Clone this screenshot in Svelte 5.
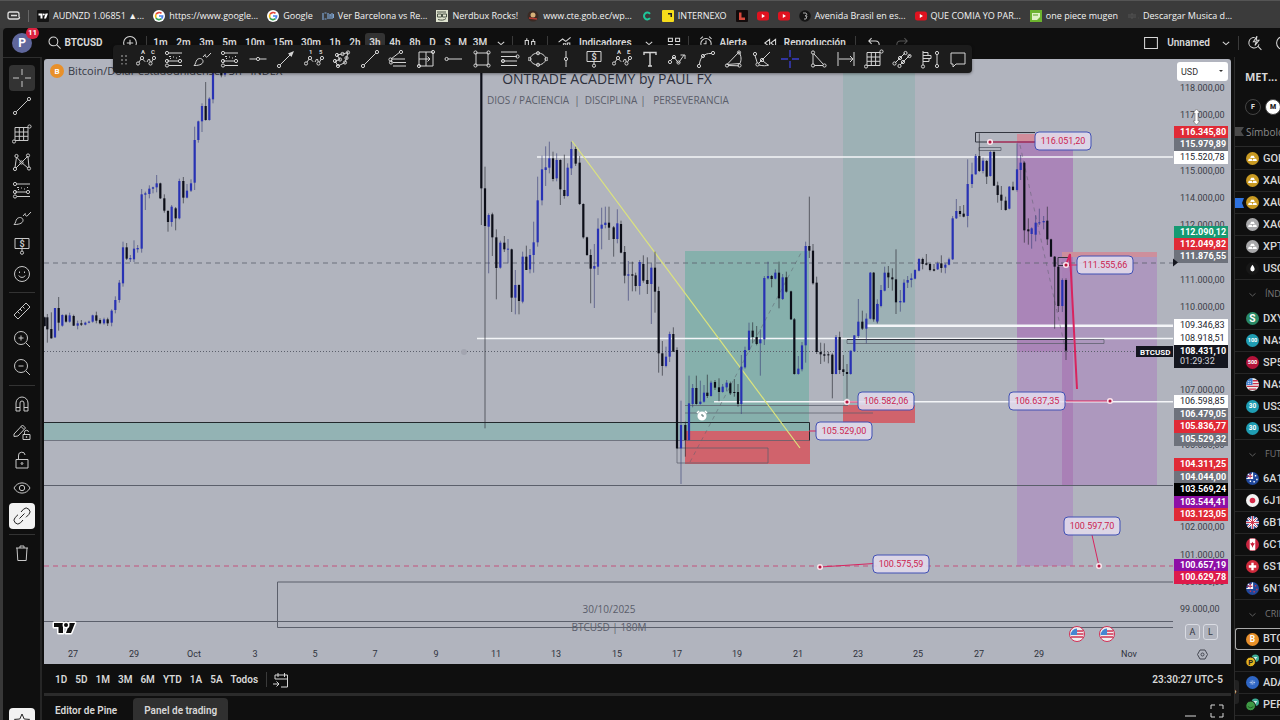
<script>
  const dot = (x, y, r = 1.6) => `<circle cx="${x}" cy="${y}" r="${r}"/>`;
  const dots = (...p) => p.map(([x, y]) => dot(x, y)).join('');
  const path = (d, extra = '') => `<path d="${d}" ${extra}/>`;
  const letter = (t, x, y, s = 6) => `<text x="${x}" y="${y}" font-size="${s}">${t}</text>`;
  const solid = 'fill="currentColor" stroke="none"';

  const wave = (a, b) =>
    path('M3 13l2.2-3M6.8 10.2l2.4 2.6M11 13l1.6-3M13.5 10l.8 3M15.6 13l1.6-3') +
    dots([2, 14.5], [6, 9], [14.5, 14.5], [18, 9]) + letter(a, 5, 5) + letter(b, 15, 5);
  const channel =
    path('M5 4h13M3 12h11M5 16.5h13') + path('M5 7.5h2M9 8h1M12 9h1M15 7.5h1M6 9.5h1') +
    dots([3, 4], [16, 12], [3, 12], [3, 16.5]);
  const grid = path('M3 3.5h13v13H3zM7.3 3.5v13M11.6 3.5v13M3 8h13M3 12.3h13') + dots([2, 17.5], [17.5, 2.5]);
  const brush = path('M2 16.5C4 15 3.500 12.500 5 10.800C7 8.700 10.500 9.300 11 11.800C11.400 14.500 8.500 16.600 2 16.500zM11 8l2.200-2.500c-.2 1.800.8 3 2 2.500L19 4');
  const trend = path('M4.200 15.800L15.800 4.200') + dots([3, 17], [17, 3]);
  const price = path('M3 2.500h14v10H3zM10 12.500v2.500') + dot(10, 16.700) + letter('$', 7.600, 10.800, 9);
  const zoomGlass = path('M14 14l4 4') + dot(9, 9, 6.500) + path('M6.500 9h5');

  const icons = {
    cross: path('M10 1v6M10 13v6M1 10h6M13 10h6'),
    trend, grid, brush, price, channel,
    xabcd: path('M3 15.500L4.500 5M4.500 5l5 5.500M16 4L9.500 10.500M17 15.500L16 5M4 16l5.500-5.500L16 16') + dots([3, 17], [4.500, 4], [9.500, 10.500], [16, 3.500], [17, 16.500]),
    smile: dot(10, 10, 7.500) + path('M6.800 11.500c1 2.500 5.400 2.500 6.400 0M7.500 7.500v1.500M12.500 7.500v1.500'),
    ruler: path('M2 14L14 2l4 4L6 18zM5.500 10.500l2 2M8 8l2 2M10.500 5.500l2 2'),
    zoomIn: zoomGlass + path('M9 6.500v5'),
    zoomOut: zoomGlass,
    magnet: path('M4 17V9a6 6 0 0 1 12 0v8h-4V9a2 2 0 0 0-4 0v8zM4 13.500h4M12 13.500h4'),
    pencilLock: path('M2 12L10.500 3l3 3L6 14l-4 .5zM9 4.500l3 3M11 12.500h7v5h-7zM12.500 12.500v-2a2 2 0 0 1 4-.5') + dot(14.500, 15, .5),
    lock: path('M4 9.500h12v8.500H4zM6.500 9.500V6a3.300 3.300 0 0 1 6.600-1') + dot(10, 13.500, .9),
    eye: path('M2 10c3.500-6.800 12.500-6.800 16 0-3.500 6.800-12.500 6.800-16 0z') + dot(10, 10, 2.700),
    link: path('M9 6l2.500-2.800a3.600 3.600 0 0 1 5.300 5.300L14 11.300M11 14l-2.500 2.800a3.600 3.600 0 0 1-5.300-5.300L6 8.700M7.500 12.500l5-5'),
    trash: path('M4 5h12M5 5l.8 12.500h8.400L15 5M8 5V3h4v2'),
    star: path('M10 3l2.200 5 5.300.4-4 3.500 1.200 5.100L10 14.200 5.300 17l1.200-5.100-4-3.500L7.800 8z'),
    abc: wave('A', 'C'),
    impulse: wave('1', '5'),
    triangleWave: wave('A', 'E'),
    hline: path('M1.500 10h6.500M12 10h6.500') + dot(10, 10),
    arrow: path('M4.200 15.800L15 5') + dot(3, 17) + path('M18 2l-6 2.500 3.500 3.500z', solid),
    poly: path('M5 6l5.500-1L16 3.500 14.500 9 13 13.500 6 17 3 12l5-1.500z') + dots([5, 6], [10.500, 5], [16, 3.500], [14.500, 9], [13, 13.500], [6, 17], [3, 12], [8, 10.500]),
    wedge: path('M3 10L12 3M3 10h14M5 13.500h13M5 17h13M3.500 11v2.500') + dots([2.500, 10.500], [13, 3], [3, 13.500]),
    rangeBox: path('M3 3h14v14H3zM3 10h11M11.500 7.500L14 10l-2.500 2.500M10 3v14') + dots([3, 17], [17, 3]),
    hray: path('M4.200 10H18') + dot(2.600, 10),
    rect: path('M4 4h12v12H4z') + dots([3.500, 3.500], [16.500, 3.500], [3.500, 16.500], [16.500, 16.500]),
    levels: path('M1 3h16M1 7.500h16M1 12h16M1 16.500h16') + dots([17.500, 7.500], [3, 12]),
    ellipse: path('M2 10c2-8 14-8 16 0-2 8-14 8-16 0z') + dots([1.500, 10], [18.500, 10], [10, 4.200], [10, 15.800]),
    vline: path('M10 2v6.300M10 11.700V18') + dot(10, 10),
    text: path('M4 6V3.500h12V6M10 3.500v13.500M8 17h4', 'stroke-width="1.400"'),
    path: path('M2 12l4-4 4.500 6L16 6M12.500 6H17v4') + dots([2, 13], [6, 8], [10.500, 13.500]),
    curve: path('M3.500 15C4 9 8 4 15 4.500') + dots([3, 17], [7, 7], [17, 4]),
    arcTri: path('M3 15.500L15 3c2.500 4 2.500 8 1 11.500zM4 16.500l11 .3') + dots([3, 16.500], [15, 3.500], [15.500, 16.500]),
    fork: path('M3 6.500l2.300 7.500M6.500 14.500L18 3M7 16c4 1 7 1 10 0M11 12l5 4') + dots([5.500, 15.500], [10, 11], [3, 5]),
    crossBlue: path('M10 1v7M10 12v7M1 10h7M12 10h7', 'stroke="#3a3ecb" stroke-width="1.400"'),
    triangle: path('M5 5v10M6 5l9.500 10.500M6.500 16.500h8.500') + dots([5, 3.500], [5, 16.500], [16.500, 16.500]),
    measure: path('M2 3v14M18 3v14M3 10h14M14 7l3 3-3 3'),
    gridBox: grid,
    parallel: path('M3 14L13 4M8 16L18 6') + dots([2.500, 14.500], [8, 9], [13.500, 4], [11, 13], [7.500, 17], [17.500, 7]),
    profile: path('M3 2v14M3 3.500h5v3H3M3 6.500h8v3H3M3 9.500h6v3H3M17 6v9') + dots([3, 17.500], [17, 4], [17, 17]),
    note: path('M3 4h14v11H8l-3 3v-3H3z'),
    search: dot(8, 8, 5.500) + path('M12 12l5 5'),
    plus: dot(10, 10, 8) + path('M10 6v8M6 10h8'),
    chevron: path('M6 8.500l4 3.500 4-3.500'),
    candles: path('M6 4v3M6 15v3M4 7h4v8H4zM14 5v3M14 14v3M12 8h4v6h-4z'),
    indicators: path('M2 9l5-4 4 3 6-5M3 17v-4h3v4M8 17v-6h3v6M13 17v-7h3v7'),
    tiles: path('M3 4h5v4H3zM12 4h5v4h-5zM3 12h5v4H3zM12 12h5v4h-5z'),
    clock: dot(10, 11, 6.500) + path('M10 7v4h-3M3 5l3-3M17 5l-3-3'),
    rewind: path('M9.500 5.500v9l-6-4.500zM17 5.500v9l-6-4.500z'),
    undo: path('M7 4L3.500 7.500 7 11M3.500 7.500H12c3 0 4.500 2 4.500 5'),
    redo: path('M13 4l3.500 3.500L13 11M16.500 7.500H8c-3 0-4.500 2-4.500 5'),
    square: path('M2 3h16v14H2z'),
    quick: path('M9.500 3.200a6.500 6.500 0 1 0 5.500 8.500M13.500 14l4.500 4.500M12.500 1.500L8 8.500h3.500L10 13l5-6.500h-3.500z'),
    ring: dot(10, 10, 8),
    calendar: path('M4 9V5h12.500v12H10M4 9h12.500M7 3v4M13.500 3v4M2 14h6M5.500 11.500L8 14l-2.500 2.500'),
    minimize: path('M4 15h11'),
    maximize: path('M4 8V4h4M12 4h4v4M16 12v4h-4M8 16H4v-4'),
  };

  const bookmarks = [
    ['tv', 'AUDNZD 1.06851 ▲...'], ['google', 'https://www.google...'], ['google', 'Google'],
    ['bars', 'Ver Barcelona vs Re...'], ['nerd', 'Nerdbux Rocks!'], ['crest', 'www.cte.gob.ec/wp...'],
    ['c', ''], ['yellow', 'INTERNEXO'], ['l', ''], ['yt', ''], ['yt', ''],
    ['dark', 'Avenida Brasil en es...'], ['yt', 'QUE COMIA YO PAR...'], ['green', 'one piece mugen'],
    ['faint', 'Descargar Musica d...'],
  ];

  const intervals = ['1m', '2m', '3m', '5m', '10m', '15m', '30m', '1h', '2h', '3h', '4h', '8h', 'D', 'S', 'M', '3M'];
  const intervalClass = (t) => (t.length === 3 ? 'wide' : t.length === 1 ? 'one' : t.endsWith('m') ? 'min' : 'hour');

  const favourites = ['abc', 'channel', 'brush', 'channel', 'hline', 'arrow', 'impulse', 'poly', 'trend', 'wedge', 'rangeBox', 'hray', 'rect', 'levels', 'ellipse', 'vline', 'price', 'triangleWave', 'text', 'path', 'curve', 'arcTri', 'fork', 'crossBlue', 'triangle', 'measure', 'gridBox', 'parallel', 'profile', 'note'];
  const tools = ['cross', 'trend', 'grid', 'xabcd', 'channel', 'brush', 'price', 'smile', '-', 'ruler', 'zoomIn', 'zoomOut', '-', 'magnet', 'pencilLock', 'lock', 'eye', 'link', '-', 'trash'];
  const ranges = ['1D', '5D', '1M', '3M', '6M', 'YTD', '1A', '5A', 'Todos'];

  const watch = [
    { rows: [['gold', 'GOLD'], ['gold', 'XAUUSD'], ['gold', 'XAUEUR', true], ['silver', 'XAGUSD'], ['silver', 'XPTUSD'], ['oil', 'USOIL']] },
    { title: 'ÍNDICES', rows: [['dxy', 'DXY'], ['n100', 'NAS100'], ['s500', 'SP500'], ['us', 'NASDAQ'], ['n30', 'US30'], ['n30', 'US30M']] },
    { title: 'FUTUROS', rows: [['au', '6A1!'], ['jp', '6J1!'], ['gb', '6B1!'], ['ca', '6C1!'], ['ch', '6S1!'], ['nz', '6N1!']] },
    { title: 'CRIPTO', rows: [['btc', 'BTCUSD'], ['pond', 'PONKE'], ['ada', 'ADAUSD'], ['pepe', 'PEPE']] },
  ];

  // Candles: x, high, body top, body bottom, low, colour; in thirds of a chart unit from the group's origin.
  const groups = [
    { ox: 0, oy: 60, rows: `134 770 772 798 800 k|142 762 772 808 848 k|154 757 807 835 836 k|165 744 744 832 834 b|176 711 744 788 812 k|187 763 765 797 800 b|198 762 766 785 788 k|209 758 766 785 788 b|221 764 768 797 798 k|233 782 790 797 808 b|244 780 790 794 798 k|256 785 788 794 796 b|267 782 785 788 790 b|278 764 766 785 788 b|289 755 766 782 790 k|300 775 780 790 793 k|312 773 778 790 794 b|323 773 778 790 798 k|335 748 752 788 799 b|346 709 720 750 760 b|358 660 668 720 728 b|369 545 562 670 680 b|380 549 562 596 600 k|391 585 594 598 606 b|402 541 566 598 606 b|413 555 564 568 578 b|425 387 403 566 578 b|436 395 400 404 450 b|448 376 386 402 415 b|459 380 382 386 400 b|470 345 370 382 397 b|481 368 370 415 417 k|493 403 415 452 458 k|504 450 453 486 515 k|515 435 440 486 500 b|527 441 445 475 511 k|538 356 363 475 478 b|550 351 363 413 430 k|561 372 392 413 415 b|573 358 370 392 396 b|584 200 240 368 390 b|595 182 184 240 248 b|606 130 138 184 216 b|617 66 138 180 182 k|628 112 116 180 182 b|639 0 0 118 130 b|664 0 0 46 52 k|675 0 0 44 50 b` },
    { ox: 460, oy: 120, rows: `64 -180 -180 205 315 k|75 140 205 318 925 k|86 280 285 320 460 b|97 278 283 352 408 k|109 328 352 444 538 k|121 362 368 443 446 b|133 348 368 388 396 k|144 357 386 388 430 b|155 386 388 533 576 k|166 450 495 533 583 b|177 493 495 543 583 k|188 395 410 545 550 b|199 377 410 450 450 k|210 387 405 448 460 b|221 305 367 405 458 b|233 170 241 367 380 b|246 107 148 241 256 b|257 79 142 150 198 b|268 65 115 143 160 b|279 95 115 177 184 k|290 100 120 175 184 b|301 118 120 208 255 k|313 104 210 228 236 k|323 130 143 228 230 b|334 65 87 145 165 b|347 80 87 131 138 k|359 108 128 252 255 k|370 250 252 352 356 k|381 350 352 405 408 k|392 388 405 446 550 k|403 372 438 446 564 b|414 295 326 440 465 b|425 263 314 326 388 b|436 260 308 315 325 b|447 260 308 323 360 k|461 318 322 357 410 k|472 268 310 357 370 b|483 302 312 398 400 k|494 378 396 467 490 k|505 423 463 467 542 b|517 425 463 467 514 k|527 458 466 498 514 k|539 420 426 498 524 b|550 406 432 482 488 k|562 412 480 492 522 k|574 430 443 492 612 b|585 395 443 515 578 k` },
    { ox: 640, oy: 230, rows: `56 170 183 370 428 k|67 333 370 408 437 k|78 350 380 408 412 b|89 305 312 380 396 b|100 292 312 365 366 k|111 352 360 655 656 k|123 512 585 655 762 b|136 575 585 630 680 k|147 437 520 630 632 b|158 462 474 522 532 b|169 437 474 522 524 k|181 452 515 522 524 b|192 465 488 515 518 b|202 434 488 498 504 k|213 452 458 498 500 b|225 450 456 473 480 k|237 445 472 486 514 k|248 462 470 486 488 b|260 450 458 472 484 b|271 455 460 490 495 k|283 447 486 489 500 k|294 462 486 522 530 k|304 375 410 522 552 b|315 350 360 412 416 b|327 278 302 360 362 b|338 277 302 321 340 k|350 288 321 342 346 k|361 298 328 340 437 b|373 138 144 328 345 b|384 95 138 145 148 b|395 135 138 147 172 k|406 118 128 146 148 b|417 95 128 205 235 k|428 132 142 207 210 b|439 125 142 185 188 k|453 182 184 268 270 k|463 264 268 432 434 k|475 378 416 432 434 b|486 336 346 418 424 b|497 35 48 346 398 b|508 -100 48 62 84 k|519 42 62 160 164 k|530 140 158 366 372 k|542 338 366 373 402 k|553 340 373 377 395 k|565 365 373 376 400 k|577 370 374 432 505 k|588 315 321 432 433 b|599 305 321 420 432 k|610 375 418 426 438 k|621 402 426 432 505 k|632 362 362 432 434 b|643 316 316 364 366 b|655 207 275 318 324 b|667 242 275 296 300 k|679 250 266 296 340 b|691 126 128 266 268 b|701 126 128 268 275 k|712 208 222 275 280 b` },
    { ox: 840, oy: 110, rows: `112 580 582 632 640 b|123 525 540 588 592 b|134 470 488 542 544 b|145 468 488 502 534 k|157 475 502 508 542 k|168 418 508 577 612 k|181 540 573 577 605 b|192 508 518 577 578 b|203 498 510 518 534 b|214 490 505 510 532 b|225 478 480 506 508 b|237 444 447 482 484 b|248 443 447 462 478 k|259 432 460 464 466 k|270 460 462 480 484 k|282 462 478 482 484 k|293 455 460 478 480 b|304 436 460 474 488 k|316 460 464 473 490 b|327 443 448 464 466 b|338 318 325 448 450 b|349 267 303 325 327 b|360 288 303 312 320 k|371 285 311 320 322 k|383 148 222 318 352 b|396 158 193 222 234 b|407 132 138 193 194 b|418 70 138 183 186 k|429 143 152 183 190 b|440 150 153 200 222 k|451 122 126 198 200 b|462 122 126 227 228 k|473 215 226 255 278 k|484 228 254 272 300 k|497 260 272 300 302 k|508 228 230 296 298 b|519 215 230 240 242 k|531 100 178 240 245 b|542 135 158 180 210 b|553 154 158 361 398 k|565 325 358 364 404 k|575 352 355 372 416 b|587 316 338 374 394 b|598 296 337 340 345 b|611 318 333 337 358 b|622 290 332 388 405 k|633 386 388 440 440 k|644 438 440 470 656 k|655 468 470 588 606 k|667 505 510 588 606 b|678 505 510 722 750 k` },
  ];
  const candles = groups.flatMap((g) =>
    g.rows.split('|').map((r) => {
      const [x, h, t, b, l, c] = r.split(' ');
      return { x: g.ox + x / 3, h: g.oy + h / 3, t: g.oy + t / 3, b: g.oy + b / 3, l: g.oy + l / 3, up: c === 'b' };
    })
  );

  const scale = [['118.000,00', 88], ['117.000,00', 115], ['115.000,00', 171], ['114.000,00', 198], ['112.000,00', 225], ['111.000,00', 280], ['110.000,00', 307], ['107.000,00', 390], ['105.000,00', 445], ['102.000,00', 527], ['101.000,00', 555], ['100.000,00', 582], ['99.000,00', 609]];
  const tags = [
    ['116.345,80', 132, 'red'], ['115.979,89', 144, 'gray'], ['115.520,78', 157, 'white'],
    ['112.090,12', 232, 'green'], ['112.049,82', 244, 'red'], ['111.876,55', 256, 'gray'],
    ['109.346,83', 325, 'white'], ['108.918,51', 338, 'white'],
    ['106.598,85', 401, 'white'], ['106.479,05', 414, 'gray'], ['105.836,77', 426, 'red'], ['105.529,32', 439, 'gray'],
    ['104.311,25', 464, 'red'], ['104.044,00', 477, 'gray'], ['103.569,24', 489, 'black'], ['103.544,41', 502, 'purple'], ['103.123,05', 514, 'red'],
    ['100.657,19', 565, 'purple'], ['100.629,78', 577, 'crimson'],
  ];
  const times = [['27', 73], ['29', 134], ['Oct', 194], ['3', 255], ['5', 315], ['7', 375], ['9', 436], ['11', 496], ['13', 556], ['15', 617], ['17', 677], ['19', 737], ['21', 798], ['23', 858], ['25', 918], ['27', 979], ['29', 1039], ['Nov', 1129]];
  const callouts = [['116.051,20', 1063, 141], ['111.555,66', 1105, 265], ['106.582,06', 886, 401], ['105.529,00', 844, 431], ['106.637,35', 1037, 401], ['100.597,70', 1092, 526], ['100.575,59', 901, 564]];
  const pins = [[990, 142], [1066, 265], [847, 402], [1110, 401], [1099, 566], [820, 567]];
</script>

{#snippet icon(name)}
  <svg class="ic" viewBox="0 0 20 20" aria-hidden="true">{@html icons[name]}</svg>
{/snippet}

{#snippet flag(kind)}
  <svg class="badge" viewBox="0 0 14 14" aria-hidden="true">
    {#if kind === 'gold' || kind === 'silver'}
      <circle cx="7" cy="7" r="7" fill={kind === 'gold' ? '#c99a22' : '#a9a9ab'} />
      <path d="M5.500 4h3l1 2.500h-5zM3 7.300h3.200l.8 2.500H2.200zM7.800 7.300H11l.8 2.500H7z" fill="#fff" />
    {:else if kind === 'oil'}
      <circle cx="7" cy="7" r="7" fill="#171717" />
      <path d="M7 3c1.500 2 2.300 3.300 2.300 4.800a2.300 2.300 0 0 1-4.600 0C4.700 6.300 5.500 5 7 3z" fill="#fff" />
    {:else if kind === 'dxy'}
      <circle cx="7" cy="7" r="7" fill="#2a8a66" />
      <text x="7" y="11" font-size="11">S</text>
    {:else if kind === 'n100' || kind === 'n30' || kind === 's500'}
      <circle cx="7" cy="7" r="7" fill={kind === 's500' ? '#b4133a' : '#1f9db3'} />
      <text x="7" y="9" font-size={kind === 'n30' ? 7 : 6}>{kind.slice(1)}</text>
    {:else if kind === 'us'}
      <circle cx="7" cy="7" r="7" fill="#eee" />
      <path d="M7 3h5.700M7 6h7M1 9h12.500M3 12h8" stroke="#c8324b" stroke-width="1.500" />
      <path d="M7 0v7.500H0A7 7 0 0 1 7 0z" fill="#3f7fd0" />
      <path d="M2 4h4M2 6h4" stroke="#fff" stroke-dasharray="1 1" />
    {:else if kind === 'au' || kind === 'nz'}
      <circle cx="7" cy="7" r="7" fill="#20489c" />
      <path d="M7 .5L7 7H.5M2 2l5 5M7 2L2 7" stroke="#fff" stroke-width="1.300" fill="none" />
      <path d="M4.500 1.500V7M1 4.500h6" stroke="#d0304a" />
      <path d="M9.500 4h1.500M11 8h1.500M8 10.500h1.500M4 10h1.500" stroke={kind === 'au' ? '#fff' : '#c93a55'} stroke-width="1.500" />
    {:else if kind === 'jp'}
      <circle cx="7" cy="7" r="7" fill="#f3f3f3" /><circle cx="7" cy="7" r="3" fill="#d62a48" />
    {:else if kind === 'gb'}
      <circle cx="7" cy="7" r="7" fill="#2c4a96" />
      <path d="M2 2l10 10M12 2L2 12M7 0v14M0 7h14" stroke="#fff" stroke-width="2.500" />
      <path d="M7 0v14M0 7h14M2.500 2.500l9 9M11.500 2.500l-9 9" stroke="#cc3049" stroke-width="1" />
    {:else if kind === 'ca'}
      <circle cx="7" cy="7" r="7" fill="#c9243f" /><path d="M4 .7h6v12.600H4z" fill="#fff" />
      <path d="M7 4l.8 1.600 1.500-.2-.6 2L7.500 8.500V10h-1V8.500L5.300 7.400l-.6-2 1.500.2z" fill="#c9243f" />
    {:else if kind === 'ch'}
      <circle cx="7" cy="7" r="7" fill="#d02a3c" /><path d="M7 3v8M3 7h8" stroke="#fff" stroke-width="2.500" />
    {:else if kind === 'btc'}
      <circle cx="7" cy="7" r="7" fill="#e8902a" /><text x="7" y="10" font-size="9">B</text>
    {:else if kind === 'ada'}
      <circle cx="7" cy="7" r="7" fill="#2f66c4" /><path d="M4 7h6M5 5.500h4M5 8.500h4" stroke="#fff" stroke-width=".8" stroke-dasharray="1 .6" />
    {:else}
      <circle cx="10" cy="4.500" r="4" fill="#3fae96" /><path d="M8 4h4M10 4v3" stroke="#fff" />
      <circle cx="5" cy="8.500" r="5.200" fill={kind === 'pond' ? '#e5b51f' : '#3f9a45'} stroke="#0f0f0f" />
      {#if kind === 'pond'}<text class="ink" x="5" y="11.500" font-size="8">P</text>{:else}<path d="M2 9c2 2 4 2 6 0" stroke="#1d5522" fill="none" />{/if}
    {/if}
  </svg>
{/snippet}

<div class="browser">
  <nav class="bookmarks" aria-label="Marcadores">
    <svg class="tabs" viewBox="0 0 14 12" aria-hidden="true"><path d="M3 2h7a2 2 0 0 1 2 2v3M3 2a2 2 0 0 0-2 2v3a2 2 0 0 0 2 2h7.500a2 2 0 0 0 2-2M4 5.500h6" /></svg>
    <span class="rule"></span>
    {#each bookmarks as [kind, label]}
      <a href="#top" aria-label={label || kind}>
        <svg class="fav" viewBox="0 0 12 12" aria-hidden="true">
          {#if kind === 'tv'}
            <rect width="12" height="12" rx="1" fill="#131313" /><path d="M1.500 3.500h4v5h-2v-3h-2zM8.500 3.500h2.500l-2 5H7z" fill="#fff" /><circle cx="6.800" cy="4.500" r="1" fill="#fff" />
          {:else if kind === 'google'}
            <circle cx="6" cy="6" r="6" fill="#fff" />
            <g fill="none" stroke-width="1.700"><path d="M3 4.300a3.600 3.600 0 0 1 5.500-.9" stroke="#e5483a" /><path d="M3 4.300a3.600 3.600 0 0 0 0 3.500" stroke="#f2b90f" /><path d="M3 7.800a3.600 3.600 0 0 0 5.500.9" stroke="#36a552" /><path d="M8.500 8.700A3.600 3.600 0 0 0 9.600 6H6" stroke="#4a83ec" /></g>
          {:else if kind === 'bars'}
            <path d="M1 3v7M2.500 3h2M2.500 9h2M6 3v6M7.500 5h1.500M8 9V4M10 3v6M11.500 4v4" stroke="#7fa6d4" stroke-width="1.200" />
          {:else if kind === 'nerd'}
            <rect width="12" height="12" fill="#dfe3cf" /><path d="M1.500 4h4v3h-4zM6.500 4h4v3h-4zM2 9.500c3 1 6 1 8-1M1 2h9" fill="none" stroke="#4a5347" />
          {:else if kind === 'crest'}
            <circle cx="6" cy="6" r="5.500" fill="#3a2a24" /><circle cx="6" cy="5" r="2.500" fill="#d6b078" /><path d="M2 8l8 1" stroke="#b53b32" stroke-width="1.500" />
          {:else if kind === 'c'}
            <path d="M9 3.800a3.400 3.400 0 1 0 0 4.400" fill="none" stroke="#1fc79a" stroke-width="2" />
          {:else if kind === 'yellow'}
            <rect width="12" height="12" rx="1" fill="#f5dc1b" /><path d="M6 3h4v4H8.500V4.500H6z" fill="#222" />
          {:else if kind === 'l'}
            <rect width="12" height="12" rx="1" fill="#120b0b" /><path d="M3 2.500h2.500v5H9V10H3z" fill="#d6493c" />
          {:else if kind === 'yt'}
            <rect y="1.500" width="12" height="9" rx="2.500" fill="#e0121f" /><path d="M4.800 4v4l3.200-2z" fill="#fff" />
          {:else if kind === 'dark'}
            <circle cx="6" cy="6" r="5.800" fill="#151515" /><path d="M4 3h3l1 1.500-2 1.500h2L7 9H5" fill="none" stroke="#aaa" />
          {:else if kind === 'green'}
            <rect width="12" height="12" fill="#6cb32e" /><path d="M2 3h8v4l-3 3H2z" fill="#dff2c4" /><path d="M3 5h5" stroke="#58a020" />
          {:else}
            <path d="M2 4v4M4 4h2v4H4zM8 4v4M11 8h.5" fill="none" stroke="#555" />
          {/if}
        </svg>{#if label}<span>{label}</span>{/if}
      </a>
    {/each}
  </nav>

  <div class="app">
    <header class="top">
      <button class="avatar" aria-label="Perfil">P<span>11</span></button>
      <button class="symbol">{@render icon('search')}BTCUSD</button>
      <button class="sq" aria-label="Comparar">{@render icon('plus')}</button>
      <i class="first"></i>
      {#each intervals as t}<button class="{intervalClass(t)} int" class:on={t === '3h'}>{t}</button>{/each}
      <button class="drop" aria-label="Más intervalos">{@render icon('chevron')}</button>
      <i></i>
      <button class="style" aria-label="Velas">{@render icon('candles')}</button>
      <i></i>
      <button class="lab ind">{@render icon('indicators')}Indicadores</button>
      <button class="drop" aria-label="Plantillas">{@render icon('chevron')}</button>
      <button class="sq" aria-label="Diseños">{@render icon('tiles')}</button>
      <i></i>
      <button class="lab">{@render icon('clock')}Alerta</button>
      <button class="lab replay">{@render icon('rewind')}Reproducción</button>
      <i class="late"></i>
      <button class="sq" aria-label="Deshacer">{@render icon('undo')}</button>
      <button class="sq dim" aria-label="Rehacer">{@render icon('redo')}</button>
      <button class="lab layout">{@render icon('square')}Unnamed{@render icon('chevron')}</button>
      <i class="first"></i>
      <button class="sq quick" aria-label="Búsqueda rápida">{@render icon('quick')}</button>
      <button class="sq edge" aria-label="Ajustes">{@render icon('ring')}</button>
    </header>

    <div class="favs" role="toolbar" aria-label="Favoritos">
      <span class="grip"></span>
      {#each favourites as f}<button aria-label={f}>{@render icon(f)}</button>{/each}
    </div>

    <div class="body">
      <aside class="tools">
        {#each tools as t}
          {#if t === '-'}<hr />{:else}<button class:sel={t === 'cross'} class:inv={t === 'link'} aria-label={t}>{@render icon(t)}</button>{/if}
        {/each}
        <div class="peek"><button class="inv" aria-label="Favoritos">{@render icon('star')}</button></div>
      </aside>

      <main>
        <section class="chart" aria-label="Gráfico BTCUSD">
          <svg class="plot" viewBox="44 59 1187 605" preserveAspectRatio="xMinYMin slice">
            <rect x="843" y="59" width="72" height="346" fill="#9db1b5" />
            <rect x="44" y="422" width="766" height="18" fill="#93b3b4" />
            <rect x="685" y="251" width="124" height="180" fill="#86b0ac" />
            <rect x="685" y="431" width="125" height="33" fill="#d0636c" />
            <rect x="843" y="405" width="72" height="18" fill="#d0636c" />
            <rect x="1017" y="134" width="56" height="432" fill="#ae99bf" />
            <rect x="1017" y="134" width="56" height="218" fill="#aa85b8" />
            <rect x="1017" y="134" width="56" height="7" fill="#d18d9b" />
            <rect x="1062" y="252" width="95" height="5" fill="#cd8f9c" />
            <rect x="1062" y="257" width="95" height="228" fill="#ad98be" />
            <rect x="1062" y="257" width="11" height="228" fill="#a980b6" />

            <g class="wm">
              <text class="title" x="607" y="84" font-size="14">ONTRADE ACADEMY by PAUL FX</text>
              <text x="528" y="104" font-size="10">DIOS / PACIENCIA</text><text x="577" y="104" font-size="10">|</text>
              <text x="611" y="104" font-size="10">DISCIPLINA</text><text x="643" y="104" font-size="10">|</text>
              <text x="691" y="104" font-size="10">PERSEVERANCIA</text>
              <text x="609" y="613" font-size="10">30/10/2025</text>
              <text x="609" y="631" font-size="10">BTCUSD | 180M</text>
            </g>

            <g fill="none" stroke="#f4f5f8" stroke-width="1.500">
              <path d="M537 157H1173M477 338.500H1173M714 401.700H1173" /><path d="M867 325.700H1173" stroke-width="2.500" />
            </g>
            <g fill="none" stroke="#5b5f6b" stroke-width="1">
              <path d="M44 263H1173" stroke-dasharray="5 4" stroke-opacity=".8" />
              <path d="M44 351.500H1173" stroke-dasharray="1 2" />
              <path d="M44 485.500H1173M44 621.500H1173M1173 582H277.500V627.500H1173" />
              <path d="M44 440.500H809M677 448H768V463H677zM685 405.500H848M685 413H873M847 339.500H1104V343.500H847z" stroke-opacity=".75" />
              <path d="M44 422.500H809.500V440.500" stroke="#22282c" />
              <path d="M1035 132.500H975.500V142H1035M1058 257.500h12v8h-12zM847 339.500h226" stroke="#333640" />
              <path d="M979 147.500h22v3h-22z" stroke-opacity=".8" />
              <path d="M690 462L802 251M1020 145L1066 352" stroke-dasharray="4 4" stroke-opacity=".5" />
            </g>
            <path d="M44 566H1173" stroke="#c2537c" stroke-dasharray="5 4" />
            <path d="M572 141L800 448" stroke="#dce47c" stroke-width="1.200" />

            {#each candles as c}
              <path d="M{c.x} {c.h}V{c.l}" stroke={c.up ? '#3a3f78' : '#25272f'} stroke-width=".8" stroke-opacity=".8" />
              <rect x={c.x - 1.1} y={c.t} width="2.200" height={Math.max(1, c.b - c.t)} fill={c.up ? '#2832b4' : '#0c0e18'} />
            {/each}

            <g fill="none" stroke="#d8245f">
              <path d="M990 142H1036M1066 265H1078M847 402H858M809 431H817M1066 401H1110M1092 535L1099 566M820 567L874 563.500" />
              <path d="M1066 265L1070 254L1077 389" stroke-width="2" />
            </g>
            {#each pins as [x, y]}<circle cx={x} cy={y} r="2.300" fill="#b5163f" stroke="#fbe4ec" stroke-width="1.500" />{/each}
            {#each callouts as [t, x, y]}
              <rect x={x - 28} y={y - 9} width="56" height="18" rx="4" fill="#e4dced" fill-opacity=".85" stroke="#4150b4" />
              <text class="call" {x} y={y + 3}>{t}</text>
            {/each}

            <g fill="none" stroke="#fff" stroke-width="1.500"><circle cx="702" cy="416" r="3.800" fill="#fff" /><path d="M697 413l2-2M707 413l-2-2" /><path d="M702 414v2h2" stroke="#54706e" stroke-width="1" /></g>
            <circle cx="464" cy="352" r="3" fill="#a3a5b0" />

            <g stroke="#fff" stroke-width="3" stroke-linejoin="round" paint-order="stroke" fill="#0d0d0d">
              <path d="M54 623h9v10h-4.500v-6H54zM69.500 623H75l-4 10h-5z" /><circle cx="66" cy="625" r="2" />
            </g>

            {#each [1077, 1107] as x}
              <circle cx={x} cy="634" r="7.500" fill="#eee" stroke="#d12e55" />
              <path d="M{x} 631h6M{x} 634h6.500M{x - 6} 637h12" stroke="#cf3354" stroke-width="1.500" />
              <path d="M{x} 628.500v6.500h-6.500a7 7 0 0 1 6.500-6.500z" fill="#4585d2" />
            {/each}

            {#each scale as [t, y]}<text class="sc" x="1180" y={y + 3}>{t}</text>{/each}
            {#each tags as [t, y, c]}
              <rect class="tag {c}" x="1174" y={y - 6} width="54" height="13" />
              <text class="sc {c}" x="1180" y={y + 3}>{t}</text>
            {/each}
            <rect x="1136" y="346" width="37" height="11" fill="#14161f" /><text class="sc green small" x="1140" y="355">BTCUSD</text>
            <rect x="1174" y="345" width="54" height="23" fill="#14161f" />
            <text class="sc green" x="1180" y="354">108.431,10</text><text class="sc count" x="1180" y="364">01:29:32</text>
            <path d="M1173 258.500l5 4-5 4z" fill="#14161f" />
            <path d="M1196.500 109l3.500 4h-2v8h2l-3.500 4-3.500-4h2v-8h-2z" fill="#fff" stroke="#666" stroke-width=".6" />
            {#each times as [t, x]}<text class="tm" {x} y="657">{t}</text>{/each}
            <path d="M1200 650h5l2.500 4.500-2.500 4.500h-5l-2.500-4.500z" fill="none" stroke="#444751" /><circle cx="1202.500" cy="654.500" r="1.500" fill="none" stroke="#444751" />
          </svg>
          <div class="legend"><svg viewBox="0 0 14 14" aria-hidden="true"><circle cx="7" cy="7" r="7" fill="#e8902a" /><text x="7" y="10" font-size="8">B</text></svg>Bitcoin/Dólar estadounidense · 3h · INDEX</div>
          <label class="cur"><select aria-label="Moneda"><option>USD</option></select></label>
          <div class="al-btns"><button>A</button><button>L</button></div>
        </section>

        <div class="ranges">
          {#each ranges as r}<button>{r}</button>{/each}
          <i></i>
          <button class="cal" aria-label="Ir a">{@render icon('calendar')}</button>
          <time>23:30:27 UTC-5</time>
        </div>
        <div class="panel">
          <button>Editor de Pine</button>
          <button class="on">Panel de trading</button>
          <span class="grow"></span>
          <button class="win" aria-label="Minimizar">{@render icon('minimize')}</button>
          <button class="win" aria-label="Maximizar">{@render icon('maximize')}</button>
        </div>
      </main>

      <aside class="watch">
        <button class="handle" aria-label="Contraer">›</button>
        <h2>MET...<span>▾</span></h2>
        <div class="chips"><b>F</b><b class="w">M</b></div>
        <div class="cols"><svg viewBox="0 0 9 9" aria-hidden="true"><path d="M0 0h9L6 4.500 9 9H0z" fill="#4a4a4a" /></svg>Símbolo</div>
        {#each watch as g}
          {#if g.title}<h3>{@render icon('chevron')}{g.title}</h3>{/if}
          {#each g.rows as [k, label, marked]}
            <a href="#chart" class="row" class:cur-row={label === 'BTCUSD'}>
              <svg class="mark" viewBox="0 0 9 10" aria-hidden="true">{#if marked}<path d="M0 0h9L7 5l2 5H0z" fill="#2e72e0" />{/if}</svg>
              {@render flag(k)}<span>{label}</span>
            </a>
          {/each}
        {/each}
      </aside>
    </div>
  </div>
</div>

<style>
  :global(body) { margin: 0; background: #383838; }
  .browser { display: flex; flex-direction: column; height: 100vh; overflow: hidden; background: #383838; color: #d8d8d8; font: 600 10px/14px Roboto, sans-serif; }
  button { all: unset; box-sizing: border-box; display: flex; align-items: center; justify-content: center; cursor: pointer; white-space: nowrap; }
  a { color: inherit; text-decoration: none; }
  .ic { width: 20px; height: 20px; flex: none; fill: none; stroke: currentColor; stroke-width: 1; }
  .ic :global(text) { fill: currentColor; stroke: none; font-family: Roboto, sans-serif; font-weight: 700; }

  .bookmarks { display: flex; align-items: center; gap: 9px; height: 28px; flex: none; padding: 3px 0 0 7px; box-sizing: border-box; border-top: 1px solid #555; background: #3b3b3b; color: #f2f2f2; font: 500 9px/14px "Open Sans", sans-serif; white-space: nowrap; overflow: hidden; }
  .bookmarks a { display: flex; align-items: center; gap: 4px; flex: none; }
  .tabs { width: 14px; height: 12px; flex: none; fill: none; stroke: #ddd; stroke-width: 1.300; }
  .rule { width: 1px; height: 12px; margin: 0 -1px 0 -2px; background: #666; }
  .fav { width: 12px; height: 12px; flex: none; }

  .app { position: relative; flex: 1; min-height: 0; display: flex; flex-direction: column; margin-left: 3px; background: #0f0f0f; border-radius: 4px 0 0 0; }
  .top { display: flex; align-items: center; height: 29px; flex: none; overflow: hidden; }
  .top i { width: 1px; height: 14px; flex: none; background: #3a3a3a; }
  .top i.first { margin: 0 2px; }
  .top i.late { margin: 0 4px 0 9px; }
  .top .ic { width: 16px; height: 16px; stroke-width: 1.300; }
  .avatar { position: relative; width: 20px; height: 20px; margin-left: 9px; flex: none; border-radius: 50%; background: #5f679c; color: #fff; font-size: 12px; font-weight: 700; }
  .avatar span { position: absolute; top: -6px; right: -7px; width: 13px; height: 12px; border-radius: 6px; background: #d9213f; font-size: 8px; line-height: 12px; text-align: center; }
  .symbol { gap: 1px; width: 56px; margin: 0 13px 0 15px; font-weight: 700; }
  .sq { width: 28px; height: 26px; flex: none; }
  .drop { width: 22px; height: 26px; flex: none; }
  .style { width: 34px; height: 26px; flex: none; }
  .int { height: 20px; flex: none; border-radius: 3px; }
  .min { width: 23px; } .wide { width: 28px; } .hour { width: 20px; } .one { width: 15px; }
  .int.on { background: #333; }
  .lab { gap: 6px; flex: none; margin-left: 9px; }
  .lab.ind { margin-right: 6px; }
  .lab.replay { margin-left: 15px; }
  .dim { color: #555; }
  .lab.layout { margin-left: auto; margin-right: 2px; gap: 8px; }
  .edge { margin-right: -17px; }

  .favs { position: absolute; z-index: 3; top: 17px; left: 110px; display: flex; align-items: center; height: 28px; padding: 0 0 0 5px; border-radius: 4px; background: #1c1c1c; box-shadow: 0 1px 3px #0006; color: #d4d4d4; }
  .favs button { width: 28px; height: 28px; }
  .grip { width: 14px; height: 11px; background: radial-gradient(circle, #666 1px, transparent 1px) 2px 0 / 4px 4px; clip-path: inset(0 4px 0 2px); }

  .body { flex: 1; min-height: 0; display: flex; }
  .tools { display: flex; flex-direction: column; align-items: center; width: 39px; flex: none; padding-top: 6px; box-sizing: border-box; border-top: 1px solid #2e2e2e; border-right: 2px solid #262626; color: #c8c8c8; overflow: hidden; }
  .tools > button { width: 26px; height: 26px; margin: 1px 0; flex: none; border-radius: 4px; }
  .tools > button.sel { background: #333; }
  .inv, .tools > button.inv { background: #f2f2f2; color: #222; }
  .tools hr { width: 26px; height: 1px; margin: 4px 0; flex: none; border: 0; background: #333; }
  .peek { margin-top: auto; height: 12px; flex: none; overflow: hidden; }
  .peek button { width: 26px; height: 26px; border-radius: 4px; }

  main { flex: 1; min-width: 0; display: flex; flex-direction: column; margin-left: 2px; }
  .chart { position: relative; flex: 1; min-height: 0; margin-top: 2px; overflow: hidden; background: #b1b4be; border-radius: 3px 3px 0 0; }
  .plot { display: block; width: 100%; height: 100%; font-family: Roboto, sans-serif; }
  .wm text { text-anchor: middle; fill: #5a5d6a; font-family: "Open Sans", sans-serif; font-weight: 400; }
  .wm .title { fill: #2d303c; }
  .call { text-anchor: middle; font-size: 9px; font-weight: 400; fill: #cb2450; }
  .sc { font-size: 9px; font-weight: 400; fill: #3a3d47; }
  .sc.small { font-size: 8px; }
  .count { fill: #d4d5da; }
  .tm { font-size: 9px; font-weight: 400; text-anchor: middle; fill: #2f323c; }
  text.red, text.gray, text.green, text.black, text.purple, text.crimson { fill: #fff; font-weight: 700; }
  text.white { fill: #23252d; }
  rect.red { fill: #e02a36; } rect.gray { fill: #6e727c; } rect.green { fill: #159a72; } rect.black { fill: #000; }
  rect.purple { fill: #8e10a6; } rect.crimson { fill: #de1a4b; } rect.white { fill: #fff; }
  .legend { position: absolute; top: 5px; left: 6px; display: flex; align-items: center; gap: 4px; color: #363944; font: 400 11px/14px "Open Sans", sans-serif; }
  .legend svg { width: 14px; height: 14px; }
  .legend text, .badge text { fill: #fff; text-anchor: middle; font-family: Roboto, sans-serif; font-weight: 700; }
  .cur { position: absolute; top: 3px; right: 3px; width: 51px; height: 19px; border-radius: 3px; background: #fff; }
  .cur::after { content: ""; position: absolute; right: 5px; top: 8px; border: 2px solid transparent; border-top-color: #333; }
  .cur select { appearance: none; width: 100%; height: 100%; padding: 0 4px; border: 0; background: none; color: #333; font: 400 9px Roboto, sans-serif; }
  .al-btns { position: absolute; right: 13px; bottom: 24px; display: flex; gap: 3px; }
  .al-btns button { width: 15px; height: 16px; border: 1px solid #d9dbe2; border-radius: 3px; color: #33363f; font-size: 9px; font-weight: 400; }

  .ranges { display: flex; align-items: center; gap: 8px; height: 29px; flex: none; padding: 2px 8px 0 11px; box-sizing: border-box; }
  .ranges i { width: 1px; height: 15px; background: #3a3a3a; }
  .ranges .cal { margin-left: -4px; }
  .ranges time { margin-left: auto; }
  .panel { display: flex; align-items: stretch; height: 27px; flex: none; border-top: 3px solid #2b2b2b; box-sizing: border-box; padding-top: 2px; }
  .panel button { padding: 4px 11px 0; border-radius: 4px 4px 0 0; }
  .panel .on { margin-left: 5px; background: #303030; }
  .panel .grow { flex: 1; }
  .panel .win { padding: 4px 3px 0; }
  .panel .win:last-child { padding-right: 4px; }

  .watch { position: relative; width: 46px; flex: none; margin-left: 3px; overflow: hidden; background: #0f0f0f; border-left: 1px solid #2b2b2b; box-sizing: border-box; white-space: nowrap; }
  .handle { position: absolute; left: -4px; bottom: 16px; width: 8px; height: 24px; border-radius: 3px; background: #222; }
  h2 { margin: 13px 0 0 10px; font: 700 11px/14px "Open Sans", sans-serif; }
  h2 span { margin-left: 7px; font-size: 8px; }
  .chips { display: flex; gap: 4px; margin: 14px 0 0 10px; }
  .chips b { width: 16px; height: 16px; flex: none; box-sizing: border-box; border: 1px solid #444; border-radius: 50%; font-size: 7px; line-height: 14px; text-align: center; }
  .chips .w { background: #fff; color: #222; }
  .cols { display: flex; align-items: center; gap: 2px; height: 28px; border-bottom: 1px solid #2b2b2b; margin: 4px 0 1px; color: #8b8b8b; font: 500 10px/14px "Open Sans", sans-serif; box-sizing: border-box; padding-bottom: 6px; padding-top: 4px; }
  .cols svg { width: 9px; height: 9px; flex: none; }
  .row { display: flex; align-items: center; height: 22px; box-sizing: border-box; border-bottom: 1px solid #262626; font-size: 11px; font-weight: 500; }
  .mark { width: 9px; height: 10px; flex: none; margin-right: 2px; }
  .badge { width: 13px; height: 13px; flex: none; margin-right: 4px; overflow: visible; }
  .badge .ink { fill: #222; }
  .cur-row { border: 1px solid #aaa; border-right: 0; border-radius: 3px 0 0 3px; }
  .cur-row .mark { margin-right: 1px; }
  h3 { display: flex; align-items: center; height: 28px; margin: 0; padding-left: 10px; gap: 5px; color: #777; font: 500 9px/12px "Open Sans", sans-serif; }
  h3 .ic { width: 15px; height: 15px; }
</style>
